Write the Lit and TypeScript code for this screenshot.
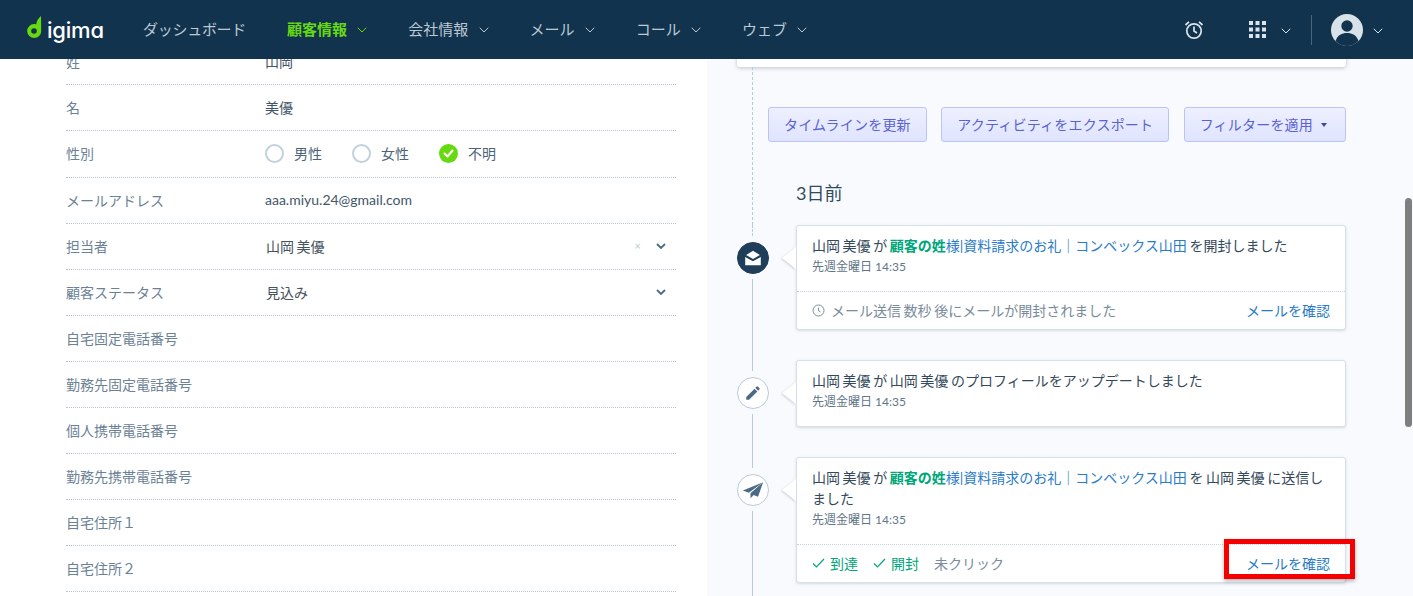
import { LitElement, html, css, svg } from "lit";
import { customElement } from "lit/decorators.js";

const chev = (cls = "chev") => html`<svg class=${cls} viewBox="0 0 10 6"><path d="M1 1l4 4 4-4" fill="none" stroke="currentColor" stroke-linecap="round"/></svg>`;

const navItems = [
  { t: "ダッシュボード", c: false, a: false },
  { t: "顧客情報", c: true, a: true },
  { t: "会社情報", c: true, a: false },
  { t: "メール", c: true, a: false },
  { t: "コール", c: true, a: false },
  { t: "ウェブ", c: true, a: false },
];

const subject = html`<a class="link"><b class="tag">顧客の姓</b>様|資料請求のお礼｜コンベックス山田</a>`;

const icons = {
  open: svg`<path d="M4.5 8.6L12 4l7.5 4.6L12 13z"/><path d="M3.5 10.8L12 15.6l8.5-4.8V20h-17z"/>`,
  edit: svg`<path d="M3 17.25V21h3.75L17.81 9.94l-3.75-3.75L3 17.25zM20.71 7.04a1 1 0 0 0 0-1.41l-2.34-2.34a1 1 0 0 0-1.41 0l-1.83 1.83 3.75 3.75 1.83-1.83z"/>`,
  send: svg`<path d="M23 3.5L1 12.5l6.5 2.6z"/><path d="M23 3.5L9.2 15.6l.2 5.4 3.3-3.6 4.8 2z"/>`,
};

@customElement("app-root")
export class AppRoot extends LitElement {
  static styles = css`
    :host { display: block; font-family: Lato, "Noto Sans CJK JP", sans-serif; font-size: 14px; color: #2f4a5f; }
    * { box-sizing: border-box; }
    .page { position: relative; height: 100vh; overflow: hidden; display: flex; background: #fff; }

    .top { position: absolute; z-index: 5; left: 0; top: 0; right: 0; height: 59px; background: #12334e; display: flex; align-items: center; padding-left: 27px; color: #bcc9d3; }
    .logo { display: flex; align-items: center; flex: 0 0 116px; color: #fff; font-family: Inter, sans-serif; font-size: 22px; font-weight: 500; line-height: 1; letter-spacing: -.2px; font-feature-settings: "cv11"; }
    .logo svg { width: 16px; height: 24px; margin: -6px 4px 0 0; }
    .nav { display: flex; gap: 41px; font-size: 15px; padding-bottom: 2px; }
    .nav-item { display: flex; align-items: center; gap: 10.25px; }
    .nav-item.tight { letter-spacing: -0.28px; }
    .nav-item.on { color: #66d911; font-weight: 700; }
    .chev { width: 10px; height: 6px; display: block; margin-top: 2px; }
    .tools { margin-left: auto; display: flex; align-items: center; color: #dbe4ea; padding-right: 30px; }
    .clock { width: 20px; height: 20px; margin-right: 45px; }
    .apps { width: 17px; height: 17px; margin-right: 15px; }
    .sep { width: 1px; height: 30px; background: #4a6478; margin: 0 19px 0 20px; }
    .avatar { width: 32px; height: 32px; margin-right: 10px; }

    .left { flex: 0 0 707px; padding: 39px 31px 0 66px; background: #fff; }
    .row { height: 46px; display: flex; align-items: center; border-bottom: 1px dotted #b4c4d1; padding-bottom: 2px; }
    .row.tall { height: 47px; }
    .label { flex: 0 0 199px; color: #6b8296; }
    .value { flex: 1; display: flex; align-items: center; color: #3f566a; }
    .value.sel { padding-left: 1px; color: #46525c; word-spacing: -1px; }
    .x { margin-left: auto; color: #bcccd8; font-size: 11px; }
    .sel-chev { width: 10px; height: 6px; color: #4a6a85; margin: 0 10px 0 auto; display: block; }
    .x + .sel-chev { margin-left: 15px; }
    .radio { display: flex; align-items: center; gap: 10px; margin-right: 30px; color: #4b6478; }
    .dot { width: 19px; height: 19px; border-radius: 50%; border: 2px solid #c2d1dc; }
    .dot.on { border: 0; background: #66d911; display: grid; place-items: center; }
    .dot svg { width: 11px; height: 9px; }

    .right { flex: 1; min-width: 0; background: #f9fafd; padding: 0 67px 0 30px; }
    .stub-card { height: 67px; background: #fff; border-radius: 0 0 3px 3px; box-shadow: 0 1px 4px rgba(70, 95, 120, .35); }
    .pre { margin-left: 15px; border-left: 1px dashed #b9cbd9; padding: 40px 0 0 15px; }
    .btns { display: flex; justify-content: space-between; }
    button { height: 35px; padding: 0 15px 2px; font: inherit; letter-spacing: .2px; color: #5a62d0; border: 1px solid #bcc3fb; border-radius: 3px; background: linear-gradient(#eef0ff, #dfe4ff); display: flex; align-items: center; }
    .caret { width: 0; height: 0; border: 3px solid transparent; border-top: 4px solid #3d45a8; border-bottom: 0; margin: 2px 3px 0 8px; }
    h2 { margin: 0; padding: 41px 0 0 28px; font-size: 18px; font-weight: 400; line-height: 20px; color: #2f4a5f; height: 83px; }

    .ev { display: flex; gap: 27px; padding-bottom: 30px; }
    .rail { flex: 0 0 32px; display: flex; flex-direction: column; align-items: center; margin-bottom: -30px; }
    .seg { flex: 0 0 11px; border-left: 1px solid #b9cbd9; margin-right: 1px; }
    .seg.dash { border-left-style: dashed; }
    .seg.grow { flex: 1; }
    .ic { flex: 0 0 32px; width: 32px; border-radius: 50%; border: 1px solid #b9cbd9; background: #fff; display: grid; place-items: center; margin: 6px 0 5px; color: #4a6a85; }
    .ic.dark { background: #1e3e5a; border-color: #1e3e5a; color: #fff; }
    .ic svg { width: 18px; height: 18px; fill: currentColor; display: block; }
    .ic.open svg, .ic.send svg { width: 22px; height: 22px; }
    .card { flex: 1; min-width: 0; position: relative; background: #fff; border: 1px solid #d5e0e8; border-radius: 3px; box-shadow: 0 1px 3px rgba(80, 110, 135, .22); }
    .card::before { content: ""; position: absolute; left: -15px; top: 21px; border: 11px solid transparent; border-left: 0; border-right: 14px solid #fff; filter: drop-shadow(-1px 1px 1px rgba(80, 110, 135, .25)); }
    .main { padding: 9px 15px 14px; }
    .txt { line-height: 21px; color: #33495c; word-spacing: -1px; }
    .when { margin-top: 1px; font-size: 12px; line-height: 20px; color: #5f7689; }
    .link { color: #2a7cc7; }
    .tag { color: #00a67a; font-weight: 700; }
    .foot { height: 38px; display: flex; align-items: center; padding: 0 15px 2px; border-top: 1px dotted #c4d2dc; color: #7a8c9b; word-spacing: -1px; }
    .foot .clk { width: 13px; height: 13px; margin: 2px 6px 0 0; }
    .foot .link { margin-left: auto; position: relative; }
    .ok { color: #00a67a; display: flex; align-items: center; gap: 5px; margin-right: 15px; }
    .ok svg { width: 13px; height: 10px; }
    .mark { position: absolute; left: -22px; right: -25px; top: -14px; bottom: -6px; border: 5px solid #f40000; box-shadow: 0 2px 4px rgba(0, 0, 0, .3); }
    .thumb { position: absolute; z-index: 6; left: 1405px; top: 198px; width: 7px; height: 229px; border-radius: 4px; background: #7f7f7f; }
  `;

  private field(label: string, value: unknown = "", cls = "") {
    return html`<div class="row ${cls}"><div class="label">${label}</div>${value}</div>`;
  }

  private radio(t: string, on = false) {
    return html`<div class="radio">
      <span class="dot ${on ? "on" : ""}">${on ? html`<svg viewBox="0 0 11 9"><path d="M1.5 4.5l3 3 5-6" fill="none" stroke="#fff" stroke-width="2" stroke-linecap="round" stroke-linejoin="round"/></svg>` : ""}</span>${t}
    </div>`;
  }

  private event(icon: "open" | "edit" | "send", body: unknown, foot: unknown, dash = false) {
    return html`<div class="ev">
      <div class="rail">
        <div class="seg ${dash ? "dash" : ""}"></div>
        <div class="ic ${icon} ${icon === "open" ? "dark" : ""}"><svg viewBox="0 0 24 24">${icons[icon]}</svg></div>
        <div class="seg grow"></div>
      </div>
      <div class="card">
        <div class="main"><div class="txt">${body}</div><div class="when">先週金曜日 14:35</div></div>
        ${foot}
      </div>
    </div>`;
  }

  render() {
    const tick = html`<svg viewBox="0 0 13 10"><path d="M1 5.5l3.5 3.5L12 1" fill="none" stroke="currentColor" stroke-width="1.2"/></svg>`;
    return html`<div class="page">
      <header class="top">
        <div class="logo">
          <svg viewBox="0 0 16 24"><path fill="#66d911" fill-rule="evenodd" d="M14 1C14 1 14.200 6 14.200 16A7 7 0 1 1 7 9C7.800 9 8.500 9.100 9.200 9.400C9.400 6 11.500 3 14 1zM7 13.200a2.800 2.800 0 1 0 0 5.600 2.800 2.800 0 0 0 0-5.600z"/></svg>
          <span>igima</span>
        </div>
        <nav class="nav">
          ${navItems.map((n) => html`<div class="nav-item ${n.a ? "on" : ""} ${n.c ? "" : "tight"}">${n.t}${n.c ? chev() : ""}</div>`)}
        </nav>
        <div class="tools">
          <svg class="clock" viewBox="0 0 20 20" fill="none" stroke="currentColor" stroke-width="1.700"><circle cx="10" cy="11" r="7.200"/><path d="M10 6.500V11l3 2M1.500 5L5 1.800M18.500 5L15 1.800"/></svg>
          <svg class="apps" viewBox="0 0 17 17" fill="currentColor">
            ${[0, 6.5, 13].flatMap((y) => [0, 6.5, 13].map((x) => svg`<rect x=${x} y=${y} width="4" height="4"/>`))}
          </svg>
          ${chev()}
          <div class="sep"></div>
          <svg class="avatar" viewBox="0 0 32 32"><circle cx="16" cy="16" r="16" fill="#d8e2e9"/><circle cx="16" cy="12" r="5.700" fill="#12334e"/><path d="M4.500 27c2-6 6.500-8 11.500-8s9.500 2 11.500 8A16 16 0 0 1 16 32 16 16 0 0 1 4.500 27z" fill="#12334e"/></svg>
          ${chev()}
        </div>
      </header>

      <section class="left">
        ${this.field("姓", html`<div class="value">山岡</div>`)}
        ${this.field("名", html`<div class="value">美優</div>`)}
        ${this.field("性別", html`<div class="value">${this.radio("男性")}${this.radio("女性")}${this.radio("不明", true)}</div>`, "tall")}
        ${this.field("メールアドレス", html`<div class="value">aaa.miyu.24@gmail.com</div>`)}
        ${this.field("担当者", html`<div class="value sel">山岡 美優<span class="x">×</span><svg class="sel-chev" viewBox="0 0 10 6"><path d="M1 1l4 4 4-4" fill="none" stroke="currentColor" stroke-width="1.800"/></svg></div>`)}
        ${this.field("顧客ステータス", html`<div class="value sel">見込み<svg class="sel-chev" viewBox="0 0 10 6"><path d="M1 1l4 4 4-4" fill="none" stroke="currentColor" stroke-width="1.800"/></svg></div>`)}
        ${["自宅固定電話番号", "勤務先固定電話番号", "個人携帯電話番号", "勤務先携帯電話番号", "自宅住所１", "自宅住所２"].map((l) => this.field(l))}
      </section>

      <section class="right">
        <div class="stub-card"></div>
        <div class="pre">
          <div class="btns">
            <button>タイムラインを更新</button>
            <button>アクティビティをエクスポート</button>
            <button>フィルターを適用<span class="caret"></span></button>
          </div>
          <h2>3日前</h2>
        </div>
        ${this.event("open", html`山岡 美優 が ${subject} を開封しました`, html`<div class="foot">
          <svg class="clk" viewBox="0 0 13 13" fill="none" stroke="currentColor"><circle cx="6.500" cy="6.500" r="5.500"/><path d="M6.500 3.500v3.200l2 1.300"/></svg>
          メール送信 数秒 後にメールが開封されました
          <a class="link">メールを確認</a>
        </div>`, true)}
        ${this.event("edit", html`山岡 美優 が 山岡 美優 のプロフィールをアップデートしました`, "")}
        ${this.event("send", html`山岡 美優 が ${subject} を 山岡 美優 に送信し<br />ました`, html`<div class="foot">
          <span class="ok">${tick}到達</span><span class="ok">${tick}開封</span>未クリック
          <a class="link">メールを確認<span class="mark"></span></a>
        </div>`)}
      </section>
      <div class="thumb"></div>
    </div>`;
  }
}
